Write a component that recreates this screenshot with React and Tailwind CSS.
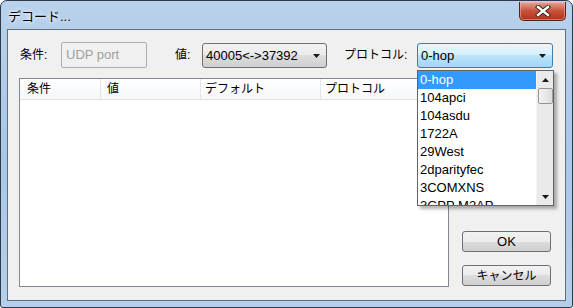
import React from 'react';

const font = { fontFamily: '"Liberation Sans", "Noto Sans CJK JP", sans-serif' };

const items = ['0-hop', '104apci', '104asdu', '1722A', '29West', '2dparityfec', '3COMXNS', '3GPP M2AP'];

function Arrow({ up }) {
    return (
        <svg width="7" height="4" viewBox="0 0 7 4">
            <path d={up ? 'M0 4 L3.5 0 L7 4 Z' : 'M0 0 L7 0 L3.5 4 Z'} fill="#1a1a1a" />
        </svg>
    );
}

function CloseButton() {
    return (
        <div className="mt-[1px] w-[47px] h-[19px] rounded-b-[5px] border border-[#5a2219] border-t-0 bg-gradient-to-b from-[#e3a597] via-[#c9503a] to-[#b43018] flex items-center justify-center shadow-[inset_0_0_0_1px_rgba(255,200,190,0.45)]">
            <svg width="16" height="12" viewBox="0 0 16 12">
                <path d="M3 2 L13 10 M13 2 L3 10" stroke="#3a1a14" strokeWidth="4.2" strokeLinecap="square" />
                <path d="M3 2 L13 10 M13 2 L3 10" stroke="#ffffff" strokeWidth="2.4" strokeLinecap="square" />
            </svg>
        </div>
    );
}

export default function App() {
    return (
        <div className="w-[573px] h-[308px] bg-white text-[12px] text-black" style={font}>
            <div className="w-full h-full flex flex-col rounded-t-[7px] rounded-b-[3px] border border-[#2f3a48] bg-gradient-to-b from-[#b8d1ec] via-[#a9c7e7] to-[#b5cfea]">
                {/* title bar */}
                <div className="h-[28px] flex items-start justify-between pl-[7px] pr-[6px]">
                    <span className="mt-[6px] text-[13px] text-black [text-shadow:0_0_6px_#ffffff,0_0_3px_#ffffff]">デコード...</span>
                    <CloseButton />
                </div>

                {/* client area */}
                <div className="relative flex-1 mx-[6px] mb-[6px] border border-[#5f6e80] bg-[#f0f0f0] flex flex-col">
                    <div className="mt-[12px] pl-[12px] flex items-center h-[26px]">
                        <span className="w-[41px]">条件:</span>
                        <div className="w-[86px] h-[26px] border border-[#adadad] rounded-[2px] bg-[#f0f0f0] flex items-center pl-[4px] text-[13px] text-[#a0a0a0]">
                            UDP port
                        </div>
                        <span className="ml-[28px] w-[27px]">値:</span>
                        <div className="w-[125px] h-[25px] mt-[1px] border border-[#707070] rounded-[3px] bg-[linear-gradient(#f2f2f2_0%,#ebebeb_50%,#dddddd_50%,#cfcfcf_100%)] flex items-center justify-between pl-[3px] pr-[6px] text-[13px]">
                            <span>40005&lt;-&gt;37392</span>
                            <Arrow />
                        </div>
                        <span className="ml-[17px] w-[73px]">プロトコル:</span>
                        <div className="w-[136px] h-[25px] mt-[1px] border border-[#3c7fb1] rounded-[3px] bg-[linear-gradient(#eaf6fd_0%,#d7effc_50%,#bce4fa_50%,#a2d6f4_100%)] flex items-center justify-between pl-[3px] pr-[6px] text-[13px]">
                            <span>0-hop</span>
                            <Arrow />
                        </div>
                    </div>

                    <div className="mt-[10px] pl-[11px] flex">
                        {/* list view */}
                        <div className="w-[430px] h-[209px] border border-[#828790] bg-white">
                            <div className="h-[21px] flex border-b border-[#e0e3e8] bg-gradient-to-b from-white to-[#f6f7f9]">
                                <div className="w-[81px] pl-[7px] flex items-center border-r border-[#e3e5e8]">条件</div>
                                <div className="w-[100px] pl-[6px] flex items-center border-r border-[#e3e5e8]">値</div>
                                <div className="w-[120px] pl-[4px] flex items-center border-r border-[#e3e5e8]">デフォルト</div>
                                <div className="flex-1 pl-[4px] flex items-center">プロトコル</div>
                            </div>
                        </div>

                        {/* buttons */}
                        <div className="ml-[13px] flex flex-col justify-end gap-[13px] pb-[1px]">
                            <button className="w-[89px] h-[21px] border border-[#707070] rounded-[3px] bg-[linear-gradient(#f2f2f2_0%,#ebebeb_50%,#dddddd_50%,#cfcfcf_100%)] flex items-center justify-center text-[13px]">
                                OK
                            </button>
                            <button className="w-[89px] h-[21px] border border-[#707070] rounded-[3px] bg-[linear-gradient(#f2f2f2_0%,#ebebeb_50%,#dddddd_50%,#cfcfcf_100%)] flex items-center justify-center">
                                キャンセル
                            </button>
                        </div>
                    </div>

                    {/* open dropdown */}
                    <div className="absolute left-[409px] top-[40px] w-[137px] h-[136px] border border-[#646464] bg-white flex shadow-[3px_3px_3px_rgba(0,0,0,0.3)] overflow-hidden">
                        <div className="flex-1 flex flex-col text-[13px]">
                            {items.map((it, i) => (
                                <div
                                    key={it}
                                    className={
                                        i === 0
                                            ? 'h-[18px] shrink-0 pl-[2px] flex items-center bg-[#3399ff] text-white'
                                            : 'h-[18px] shrink-0 pl-[2px] flex items-center text-black'
                                    }
                                >
                                    {it}
                                </div>
                            ))}
                        </div>
                        <div className="w-[17px] bg-[#eaeaea] border-l border-[#f4f4f4] flex flex-col items-center">
                            <div className="h-[17px] flex items-center justify-center">
                                <Arrow up />
                            </div>
                            <div className="w-[15px] h-[16px] border border-[#979797] rounded-[2px] bg-gradient-to-r from-[#f3f3f3] to-[#dcdcdc]" />
                            <div className="flex-1" />
                            <div className="h-[17px] flex items-center justify-center">
                                <Arrow />
                            </div>
                        </div>
                    </div>
                </div>
            </div>
        </div>
    );
}
